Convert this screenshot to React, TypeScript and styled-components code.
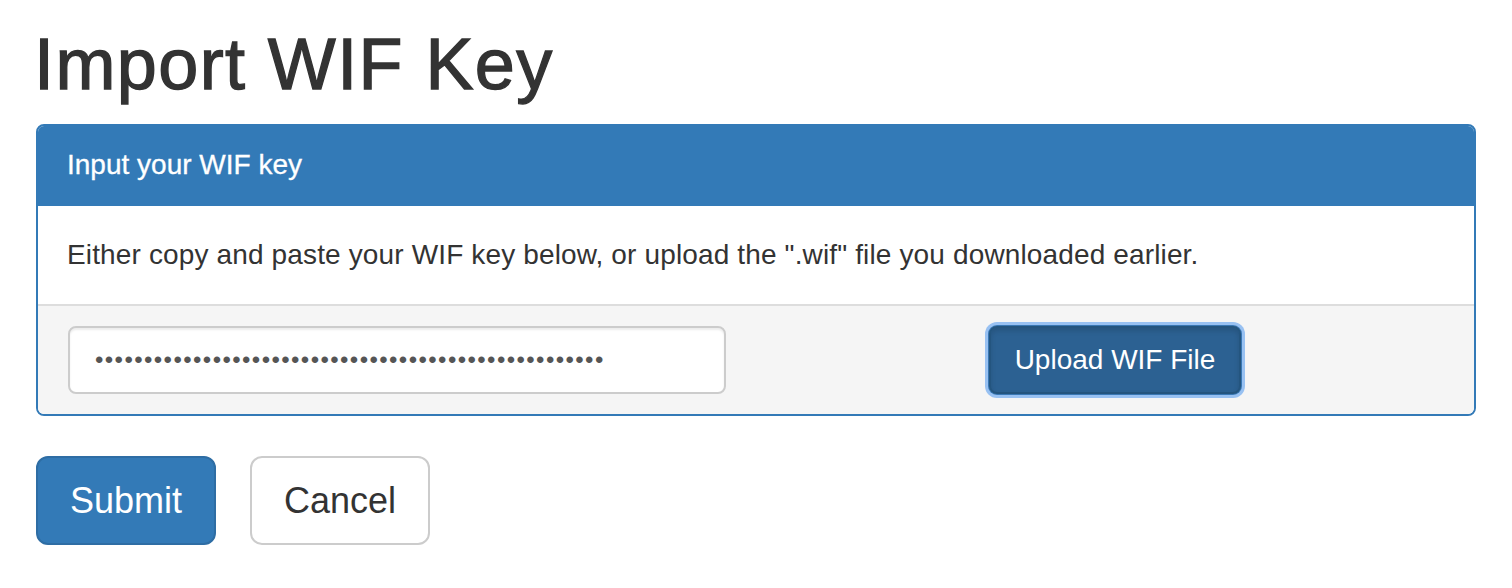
import React from 'react';
import styled, {createGlobalStyle} from "styled-components";

const GlobalStyle = createGlobalStyle`
    * { box-sizing: border-box; }
    body {
        margin: 0;
        background: #fff;
        font-family: "Liberation Sans", Arial, Helvetica, sans-serif;
        color: #333;
    }
`

const Page = styled.main`
    padding: 25px 36px 0 36px;
`
const Title = styled.h1`
    margin: 0 0 20px -2px;
    font-size: 72px;
    font-weight: 400;
    line-height: 79px;
    letter-spacing: 1.4px;
    color: #333;
    -webkit-text-stroke: 1.3px #333;
`
const Panel = styled.section`
    border: 2px solid #337ab7;
    border-radius: 8px;
    overflow: hidden;
    margin-bottom: 40px;
`
const PanelHeading = styled.div`
    background: #337ab7;
    color: #fff;
    padding: 20px 29px;
    font-size: 28px;
    line-height: 38px;
    border-bottom: 2px solid #337ab7;
    -webkit-text-stroke: 0.3px #fff;
`
const PanelBody = styled.div`
    padding: 29px 29px;
    font-size: 28px;
    line-height: 40px;
    letter-spacing: 0.14px;
    background: #fff;
`
const PanelFooter = styled.div`
    background: #f5f5f5;
    border-top: 2px solid #ddd;
    padding: 20px 30px;
    display: grid;
    grid-template-columns: 1fr 1fr;
    column-gap: 60px;
    align-items: center;
`
const KeyInput = styled.input`
    display: block;
    width: 100%;
    height: 68px;
    padding: 12px 24px 12px 25px;
    font-family: "Liberation Sans", Arial, sans-serif;
    font-size: 24px;
    letter-spacing: 1.4px;
    color: #555;
    background: #fff;
    border: 2px solid #ccc;
    border-radius: 8px;
    box-shadow: inset 0 2px 2px rgba(0, 0, 0, 0.075);
    outline: none;
`
const Centered = styled.div`
    display: flex;
    justify-content: center;
`
const Button = styled.button<{$variant: 'primary' | 'default' | 'active'; $size?: 'lg'}>`
    font-family: "Liberation Sans", Arial, sans-serif;
    border-style: solid;
    border-width: 2px;
    cursor: pointer;
    white-space: nowrap;
    font-size: ${p => p.$size === 'lg' ? '36px' : '28px'};
    line-height: ${p => p.$size === 'lg' ? '45px' : '40px'};
    padding: ${p => p.$size === 'lg' ? '20px 32px' : '12px 24px'};
    border-radius: ${p => p.$size === 'lg' ? '12px' : '8px'};
    ${p => p.$variant === 'primary' && `
        background: #337ab7;
        border-color: #2e6da4;
        color: #fff;
    `}
    ${p => p.$variant === 'default' && `
        background: #fff;
        border-color: #ccc;
        color: #333;
    `}
    ${p => p.$variant === 'active' && `
        background: #2c6192;
        border-color: #24557f;
        color: #fff;
        box-shadow: 0 0 0 1px #3a78b4, 0 0 0 4px rgba(120, 175, 240, 0.75), inset 0 3px 5px rgba(0, 0, 0, 0.125);
    `}
`
const Actions = styled.div`
    display: flex;
    gap: 34px;
`

export default function App() {
    return (
        <>
            <GlobalStyle/>
            <Page>
                <Title>Import WIF Key</Title>
                <Panel>
                    <PanelHeading>Input your WIF key</PanelHeading>
                    <PanelBody>
                        Either copy and paste your WIF key below, or upload the ".wif" file you downloaded earlier.
                    </PanelBody>
                    <PanelFooter>
                        <KeyInput type="password" readOnly value={'x'.repeat(52)}/>
                        <Centered>
                            <Button $variant="active">Upload WIF File</Button>
                        </Centered>
                    </PanelFooter>
                </Panel>
                <Actions>
                    <Button $variant="primary" $size="lg">Submit</Button>
                    <Button $variant="default" $size="lg">Cancel</Button>
                </Actions>
            </Page>
        </>
    )
}
